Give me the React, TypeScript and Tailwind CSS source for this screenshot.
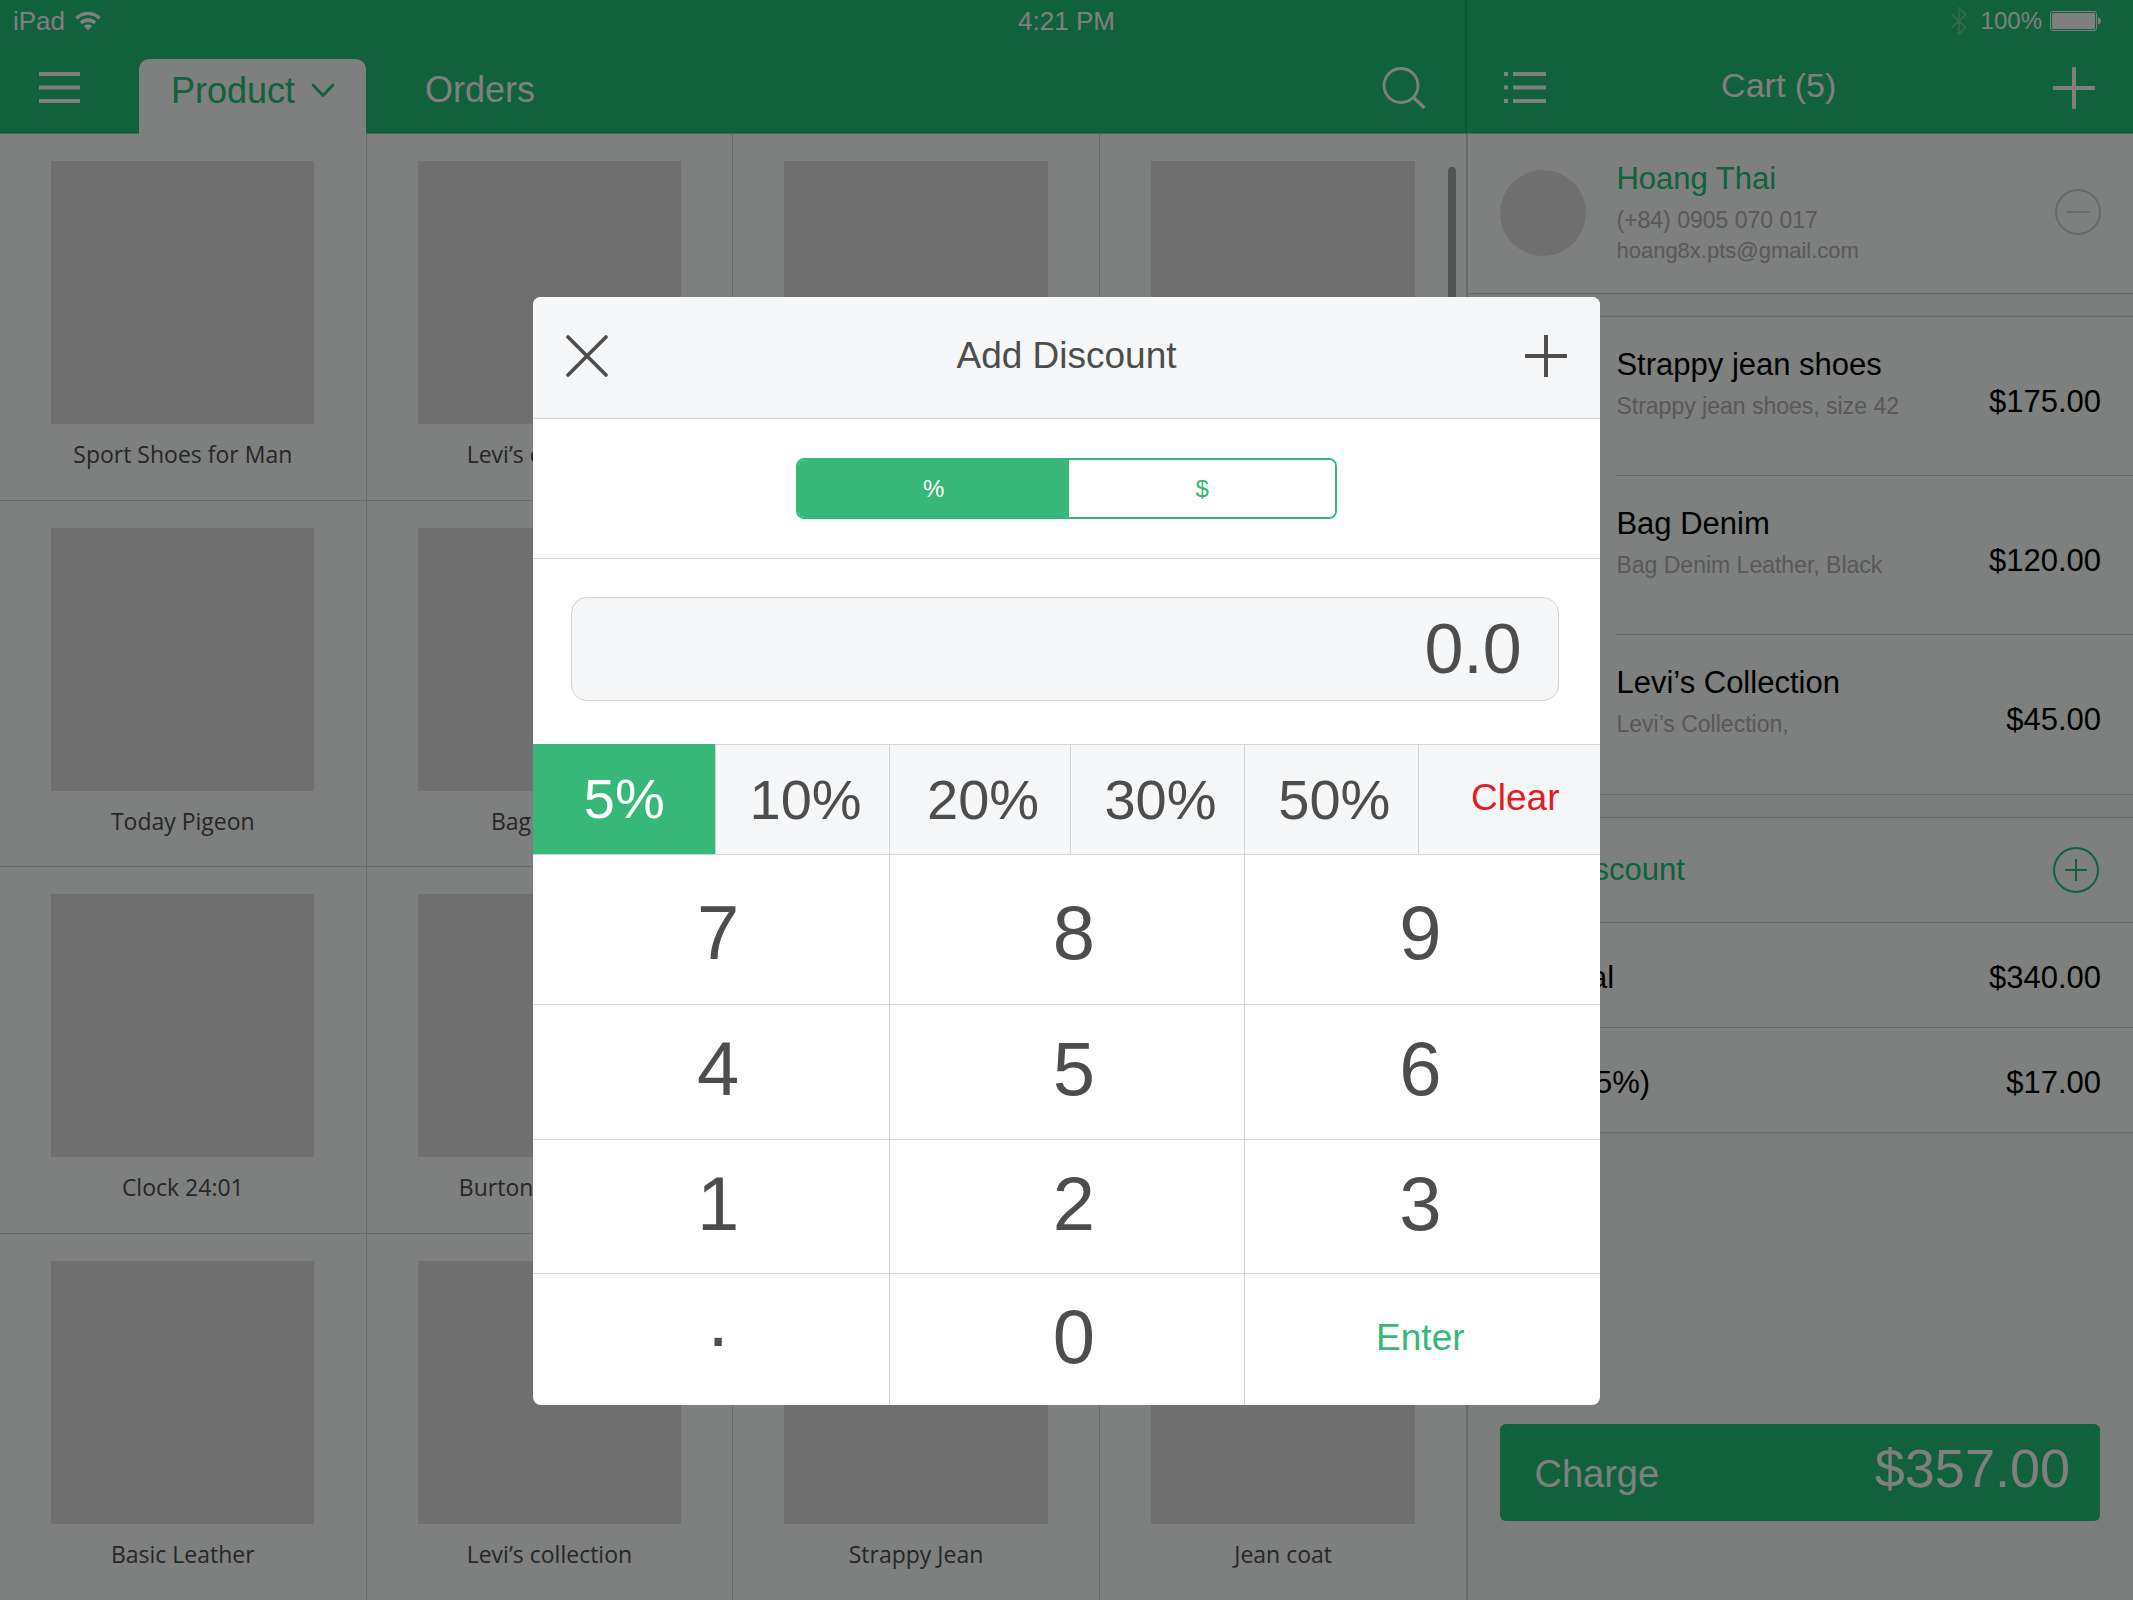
import React, { useState } from "react";

type Product = { id: number; name: string };
type CartItem = { name: string; detail: string; price: string };

const products: Product[] = [
  "Sport Shoes for Man",
  "Levi’s collection",
  "Strappy Jean",
  "Jean coat",
  "Today Pigeon",
  "Bag Denim",
  "Strappy Jean",
  "Jean coat",
  "Clock 24:01",
  "Burton Backpack",
  "Strappy Jean",
  "Jean coat",
  "Basic Leather",
  "Levi’s collection",
  "Strappy Jean",
  "Jean coat",
].map((name, id) => ({ id, name }));

const cartItems: CartItem[] = [
  { name: "Strappy jean shoes", detail: "Strappy jean shoes, size 42", price: "$175.00" },
  { name: "Bag Denim", detail: "Bag Denim Leather, Black", price: "$120.00" },
  { name: "Levi’s Collection", detail: "Levi’s Collection,", price: "$45.00" },
];

const presets = ["5%", "10%", "20%", "30%", "50%"];

function WifiIcon() {
  return (
    <svg width="26" height="20" viewBox="0 0 26 20" fill="none" stroke="currentColor" strokeWidth="3.6" aria-hidden="true">
      <path d="M1.5 7.2a16.4 16.4 0 0 1 23 0" />
      <path d="M6 12a10 10 0 0 1 14 0" />
      <path d="M13 19.500l-4.300-4.600a6.200 6.200 0 0 1 8.600 0z" fill="currentColor" stroke="none" />
    </svg>
  );
}

function BluetoothIcon() {
  return (
    <svg width="16" height="28" viewBox="0 0 16 28" fill="none" stroke="currentColor" strokeWidth="1.800" aria-hidden="true">
      <path d="M1 7.500l14 13-7 6.500V1l7 6.500-14 13" />
    </svg>
  );
}

function BatteryIcon() {
  return (
    <svg width="52" height="20" viewBox="0 0 52 20" fill="none" aria-hidden="true">
      <rect x="0.500" y="0.500" width="46" height="19" rx="2.500" stroke="currentColor" />
      <rect x="2" y="2" width="43" height="16" rx="1.500" fill="currentColor" />
      <path d="M48 6.500c2 .6 3 1.900 3 3.500s-1 2.900-3 3.500z" fill="currentColor" />
    </svg>
  );
}

function MenuIcon() {
  return (
    <svg width="41" height="31" viewBox="0 0 41 31" fill="currentColor" aria-hidden="true">
      <path d="M0 0h41v4H0zM0 13.500h41v4H0zM0 27h41v4H0z" />
    </svg>
  );
}

function ListIcon() {
  return (
    <svg width="42" height="31" viewBox="0 0 42 31" fill="currentColor" aria-hidden="true">
      <path d="M0 0h4v4H0zM9 0h33v4H9zM0 13.500h4v4H0zM9 13.500h33v4H9zM0 27h4v4H0zM9 27h33v4H9z" />
    </svg>
  );
}

function SearchIcon() {
  return (
    <svg width="44" height="42" viewBox="0 0 44 42" fill="none" stroke="currentColor" strokeWidth="2.800" aria-hidden="true">
      <circle cx="19" cy="18.500" r="17" />
      <path d="M31.500 30.500l11 10.500" strokeWidth="3.200" />
    </svg>
  );
}

function PlusIcon() {
  return (
    <svg width="42" height="42" viewBox="0 0 42 42" fill="currentColor" aria-hidden="true">
      <path d="M19 0h4v19h19v4H23v19h-4V23H0v-4h19z" />
    </svg>
  );
}

function CloseIcon() {
  return (
    <svg width="42" height="42" viewBox="0 0 42 42" stroke="currentColor" strokeWidth="3.600" strokeLinecap="round" aria-hidden="true">
      <path d="M2 2l38 38M40 2L2 40" />
    </svg>
  );
}

function ChevronIcon() {
  return (
    <svg width="24" height="15" viewBox="0 0 24 15" fill="none" stroke="currentColor" strokeWidth="2.800" strokeLinecap="round" strokeLinejoin="round" aria-hidden="true">
      <path d="M2 2l10 10.500L22 2" />
    </svg>
  );
}

function CircleIcon({ plus }: { plus?: boolean }) {
  return (
    <svg width="46" height="46" viewBox="0 0 46 46" fill="none" stroke="currentColor" strokeWidth="2" aria-hidden="true">
      <circle cx="23" cy="23" r="22" />
      <path d={plus ? "M12 23h22M23 12v22" : "M11.500 23h23"} />
    </svg>
  );
}

function Header() {
  return (
    <header className="relative border-b border-[#b4b9b6] bg-[#20c278] text-white">
      <div className="grid h-[42px] grid-cols-3 items-center text-[26px] leading-none">
        <div className="flex items-center gap-2.5 pl-[13px]">
          <span>iPad</span>
          <WifiIcon />
        </div>
        <div className="text-center">4:21 PM</div>
        <div className="flex items-center justify-end gap-3.5 pr-[31px]">
          <span className="text-[#6ad0a0]">
            <BluetoothIcon />
          </span>
          <div className="flex items-center gap-2">
            <span className="text-[24px]">100%</span>
            <BatteryIcon />
          </div>
        </div>
      </div>
      <div className="mt-[17px] grid h-[74px] grid-cols-[11fr_5fr]">
        <nav className="flex min-w-0">
          <button aria-label="Menu" className="ml-[39px] pb-[17px]">
            <MenuIcon />
          </button>
          <button className="-mb-px ml-[59px] flex w-[227px] items-center gap-4 rounded-t-[10px] bg-[#fdfffe] pb-3 pl-8 text-[36px] leading-none text-[#20c278]">
            Product
            <ChevronIcon />
          </button>
          <button className="ml-[59px] pb-3 text-[36px] leading-none">Orders</button>
          <button aria-label="Search" className="mr-10 ml-auto pb-[17px]">
            <SearchIcon />
          </button>
        </nav>
        <div className="flex min-w-0 items-center justify-between px-[38px] pb-[17px]">
          <button aria-label="Cart list">
            <ListIcon />
          </button>
          <h1 className="pr-[42px] pb-[5px] text-[34px] leading-none">Cart (5)</h1>
          <button aria-label="Add to cart">
            <PlusIcon />
          </button>
        </div>
      </div>
      <div className="absolute inset-y-0 left-[68.7%] w-0.5 bg-black/10" />
    </header>
  );
}

function ProductGrid() {
  return (
    <main className="relative min-w-0 bg-[#fdfffe]">
      <ul className="grid h-full auto-rows-fr grid-cols-4">
        {products.map((product) => (
          <li
            key={product.id}
            className="flex flex-col items-center border-r border-b border-[#d1d3d4] pt-[27px] nth-[4n]:border-r-0 nth-[n+13]:border-b-0"
          >
            <div className="aspect-square w-[72%] bg-[#dfdfdf]" />
            <p className="mt-3 font-['Open_Sans',sans-serif] text-[23px] leading-9 text-[#4d4d4d]">{product.name}</p>
          </li>
        ))}
      </ul>
      <div className="absolute top-[33px] right-[10px] h-[600px] w-2 rounded-full bg-[#a4a8a6]" />
    </main>
  );
}

function Cart() {
  return (
    <aside className="flex min-w-0 flex-col border-l-2 border-[#d1d3d4] bg-[#f7f8f8] text-[31px]">
      <section className="flex items-start border-b border-[#d1d3d4] bg-[#fdfffe] pt-8 pr-8 pb-[27px] pl-8">
        <div className="mt-1 size-[86px] shrink-0 rounded-full bg-[#dfdfdf]" />
        <div className="ml-[30px] flex-1 text-[#b0b0b0]">
          <h2 className="pb-3 text-[31px] leading-[26px] text-[#20c278]">Hoang Thai</h2>
          <p className="text-[23px] leading-8">(+84) 0905 070 017</p>
          <p className="text-[22px] leading-[30px]">hoang8x.pts@gmail.com</p>
        </div>
        <button aria-label="Remove customer" className="mt-[23px] text-[#d1d3d4]">
          <CircleIcon />
        </button>
      </section>

      <ul className="mt-[22px] border-y border-[#d1d3d4] bg-[#fdfffe] pl-[148px]">
        {cartItems.map((item) => (
          <li
            key={item.name}
            className="flex h-[159px] items-start justify-between border-b border-[#d1d3d4] pr-8 last:border-b-0"
          >
            <div className="pt-7">
              <h3 className="leading-10">{item.name}</h3>
              <p className="text-[23px] leading-[42px] text-[#b0b0b0]">{item.detail}</p>
            </div>
            <span className="pt-[65px] leading-10">{item.price}</span>
          </li>
        ))}
      </ul>

      <div className="mt-[22px] border-t border-[#d1d3d4] bg-[#fdfffe]">
        <div className="flex h-[105px] items-center justify-between border-b border-[#d1d3d4] pr-[34px] pl-8 text-[#20c278]">
          <span>Add Discount</span>
          <button aria-label="Add discount">
            <CircleIcon plus />
          </button>
        </div>
        <div className="flex h-[105px] items-center justify-between border-b border-[#d1d3d4] px-8 pt-1.5">
          <span>Subtotal</span>
          <span>$340.00</span>
        </div>
        <div className="flex h-[105px] items-center justify-between border-b border-[#d1d3d4] px-8 pt-1.5">
          <span className="flex gap-9">
            <span>Tax</span>
            <span>(5%)</span>
          </span>
          <span>$17.00</span>
        </div>
      </div>

      <button className="mr-[33px] mt-auto mb-[79px] ml-8 flex h-[97px] items-center rounded-md bg-[#20c278] pr-[30px] pb-2.5 pl-[34px] leading-none text-white">
        <span className="flex w-full items-baseline justify-between">
          <span className="text-[38px]">Charge</span>
          <span className="text-[54px]">$357.00</span>
        </span>
      </button>
    </aside>
  );
}

function DiscountDialog() {
  const [unit, setUnit] = useState<"%" | "$">("%");
  const [preset, setPreset] = useState("5%");
  const [amount, setAmount] = useState("0.0");

  const press = (key: string) => setAmount((value) => (value === "0.0" ? key : value + key));

  return (
    <div
      role="dialog"
      aria-labelledby="discount-title"
      className="w-1/2 overflow-hidden rounded-lg bg-white text-[#4d4d4d]"
    >
      <div className="flex h-[122px] items-center justify-between border-b border-[#d1d3d4] bg-[#f6f7f9] px-[33px] pb-1">
        <button aria-label="Close">
          <CloseIcon />
        </button>
        <h2 id="discount-title" className="text-[37px] leading-none">
          Add Discount
        </h2>
        <button aria-label="Add">
          <PlusIcon />
        </button>
      </div>

      <div className="flex justify-center border-b border-[#d1d3d4] py-[39px]">
        <div className="grid h-[61px] w-[541px] grid-cols-[51fr_50fr] overflow-hidden rounded-lg border-2 border-[#37b878] text-[24px]">
          {(["%", "$"] as const).map((value) => (
            <button
              key={value}
              aria-pressed={unit === value}
              onClick={() => setUnit(value)}
              className={unit === value ? "bg-[#37b878] text-white" : "bg-white text-[#37b878]"}
            >
              {value}
            </button>
          ))}
        </div>
      </div>

      <div className="pt-[38px] pr-[41px] pb-[43px] pl-[38px]">
        <input
          aria-label="Discount amount"
          value={amount}
          onChange={(event) => setAmount(event.target.value)}
          className="block h-[104px] w-full rounded-2xl border border-[#d1d3d4] bg-[#f6f7f9] pr-9 text-right text-[70px] leading-none outline-none"
        />
      </div>

      <div className="grid h-[111px] grid-cols-[183fr_174fr_181fr_174fr_174fr_181fr] border-y border-[#d1d3d4] bg-[#f6f7f9]">
        {presets.map((value) => (
          <button
            key={value}
            aria-pressed={preset === value}
            onClick={() => setPreset(value)}
            className={
              preset === value
                ? "-mt-px border-r border-[#d1d3d4] bg-[#37b878] text-[56px] leading-none text-white"
                : "border-r border-[#d1d3d4] pl-1.5 text-[56px] leading-none"
            }
          >
            {value}
          </button>
        ))}
        <button onClick={() => setAmount("0.0")} className="pb-1 pl-3 text-[37px] leading-none text-[#e41b23]">
          Clear
        </button>
      </div>

      <div className="grid grid-cols-[357fr_355fr_355fr] grid-rows-[150px_135px_134px_131px] text-[76px] leading-none">
        {["7", "8", "9", "4", "5", "6", "1", "2", "3", "·", "0"].map((key) => (
          <button
            key={key}
            onClick={() => press(key === "·" ? "." : key)}
            className="border-r border-b border-[#d1d3d4] pb-1.5 pl-3.5 nth-[3n]:border-r-0 nth-[3n]:pr-1 nth-[3n]:pl-0 nth-[-n+3]:pt-3 nth-[n+10]:border-b-0"
          >
            {key}
          </button>
        ))}
        <button className="pr-1 pb-1 text-[37px] text-[#37b878]">Enter</button>
      </div>
    </div>
  );
}

export default function App() {
  return (
    <div className="relative flex min-h-screen flex-col font-['Liberation_Sans',Arial,sans-serif] text-black">
      <Header />
      <div className="grid flex-1 grid-cols-[11fr_5fr]">
        <ProductGrid />
        <Cart />
      </div>
      <div className="absolute inset-0 flex items-start justify-center bg-black/50 pt-[297px]">
        <DiscountDialog />
      </div>
    </div>
  );
}
